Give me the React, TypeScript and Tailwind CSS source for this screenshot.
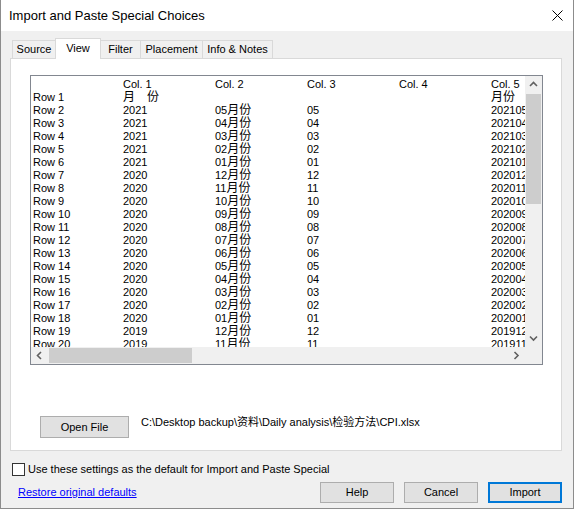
import React from 'react';

const ui = "font-['Liberation_Sans','Noto_Sans_CJK_SC',sans-serif]";

type Row = [string, string, string, string, string, string];

// year, month pairs shown in the preview grid (rows 2..20)
const periods: [number, string][] = [
  [2021, '05'], [2021, '04'], [2021, '03'], [2021, '02'], [2021, '01'],
  [2020, '12'], [2020, '11'], [2020, '10'], [2020, '09'], [2020, '08'],
  [2020, '07'], [2020, '06'], [2020, '05'], [2020, '04'], [2020, '03'],
  [2020, '02'], [2020, '01'], [2019, '12'], [2019, '11'],
];

const rows: Row[] = [
  ['Row 1', '月　份', '', '', '', '月份'],
  ...periods.map(([y, m], i): Row => [`Row ${i + 2}`, `${y}`, `${m}月份`, m, '', `${y}${m}`]),
];

const Chevron = ({ dir }: { dir: 'up' | 'down' | 'left' | 'right' }) => {
  const d = {
    up: 'M1 5 L4.5 1.5 L8 5',
    down: 'M1 1.5 L4.5 5 L8 1.5',
    left: 'M5 1 L1.5 4.5 L5 8',
    right: 'M1.5 1 L5 4.5 L1.5 8',
  }[dir];
  const horiz = dir === 'left' || dir === 'right';
  return (
    <svg width={horiz ? 7 : 9} height={horiz ? 9 : 7} viewBox={horiz ? '0 0 7 9' : '0 0 9 7'}>
      <path d={d} stroke="#606060" strokeWidth={1.6} fill="none" />
    </svg>
  );
};

const Cell = ({ text, first }: { text: string; first?: boolean }) => {
  // split digits from CJK so the ideographs get their own size
  const parts = text.split(/([\u3000-\u9fff]+)/).filter(Boolean);
  return (
    <div className={`${first ? 'w-[90px]' : 'w-[92px]'} shrink-0 whitespace-pre`}>
      {parts.map((p, i) =>
        /[\u3000-\u9fff]/.test(p) ? (
          <span key={i} className="text-[12px]">{p}</span>
        ) : (
          <span key={i}>{p}</span>
        )
      )}
    </div>
  );
};

const PreviewGrid = () => (
  <div className="ml-[19px] mt-[16px] w-[513px] h-[290px] border border-[#828790] bg-white flex flex-col">
    <div className="flex h-[271px]">
      <div className="flex-1 overflow-hidden pt-[2px] pl-[2px] text-[11px] leading-[13px] text-black">
        <div className="flex">
          <Cell text="" first />
          <Cell text="Col. 1" />
          <Cell text="Col. 2" />
          <Cell text="Col. 3" />
          <Cell text="Col. 4" />
          <Cell text="Col. 5" />
        </div>
        {rows.map((r) => (
          <div key={r[0]} className="flex h-[13px]">
            {r.map((c, i) => (
              <Cell key={i} text={c} first={i === 0} />
            ))}
          </div>
        ))}
      </div>
      {/* vertical scrollbar */}
      <div className="w-[17px] bg-[#f0f0f0] flex flex-col">
        <div className="h-[17px] flex items-center justify-center">
          <Chevron dir="up" />
        </div>
        <div className="flex-1">
          <div className="mt-[1px] mx-[1px] h-[110px] bg-[#cdcdcd]" />
        </div>
        <div className="h-[17px] flex items-center justify-center">
          <Chevron dir="down" />
        </div>
      </div>
    </div>
    {/* horizontal scrollbar */}
    <div className="flex h-[17px] bg-[#f0f0f0]">
      <div className="flex-1 flex items-center">
        <div className="w-[17px] h-full flex items-center justify-center">
          <Chevron dir="left" />
        </div>
        <div className="ml-[1px] w-[143px] h-[15px] bg-[#cdcdcd]" />
        <div className="ml-auto w-[17px] h-full flex items-center justify-center">
          <Chevron dir="right" />
        </div>
      </div>
      <div className="w-[17px]" />
    </div>
  </div>
);

const tabs = [
  { label: 'Source', w: 'w-[43px] border-l' },
  { label: 'View', w: 'w-[46px] border-x', active: true },
  { label: 'Filter', w: 'w-[40px] border-r' },
  { label: 'Placement', w: 'w-[62px] border-r' },
  { label: 'Info & Notes', w: 'w-[70px] border-r' },
];

const DialogButton = ({ label, primary }: { label: string; primary?: boolean }) => (
  <button
    className={`w-[74px] h-[21px] bg-[#e1e1e1] text-[11px] text-black flex items-center justify-center ${
      primary ? 'border-2 border-[#0078d7]' : 'border border-[#adadad]'
    }`}
  >
    {label}
  </button>
);

export default function App() {
  return (
    <div className={`${ui} w-[574px] h-[509px] border-x border-b border-[#8c8c8c] bg-[#f0f0f0] flex flex-col text-black`}>
      {/* title bar */}
      <div className="h-[31px] bg-white flex items-center pl-[8px] pr-[10px] shrink-0">
        <span className="text-[13px] leading-none">Import and Paste Special Choices</span>
        <svg className="ml-auto" width="11" height="11" viewBox="0 0 11 11">
          <path d="M0.5 0.5 L10.5 10.5 M10.5 0.5 L0.5 10.5" stroke="#000" strokeWidth={1} />
        </svg>
      </div>

      <div className="pt-[7px] flex flex-col">
        {/* tab strip */}
        <div className="ml-[11px] h-[20px] flex items-end text-[11px]">
          {tabs.map((t) =>
            t.active ? (
              <div
                key={t.label}
                className={`${t.w} relative z-10 -mb-[1px] h-[21px] border-t border-[#d9d9d9] bg-white flex items-center justify-center pb-[2px]`}
              >
                {t.label}
              </div>
            ) : (
              <div
                key={t.label}
                className={`${t.w} h-[18px] border-t border-[#d9d9d9] bg-[#f0f0f0] flex items-center justify-center`}
              >
                {t.label}
              </div>
            )
          )}
        </div>

        {/* tab panel */}
        <div className="ml-[9px] w-[552px] h-[393px] border border-[#d9d9d9] bg-white flex flex-col">
          <PreviewGrid />
          <div className="mt-[51px] ml-[29px] flex items-start">
            <button className="w-[89px] h-[22px] bg-[#e1e1e1] border border-[#adadad] text-[11px] flex items-center justify-center pt-[1px]">
              Open File
            </button>
            <span className="ml-[12px] text-[11px] leading-[13px] whitespace-nowrap">
              C:\Desktop backup\资料\Daily analysis\检验方法\CPI.xlsx
            </span>
          </div>
        </div>

        {/* default settings checkbox */}
        <div className="mt-[12px] ml-[11px] h-[13px] flex items-center">
          <div className="w-[13px] h-[13px] border border-[#333333] bg-white" />
          <span className="ml-[3px] text-[11px] leading-none">
            Use these settings as the default for Import and Paste Special
          </span>
        </div>

        {/* footer */}
        <div className="mt-[6px] h-[21px] flex items-center">
          <a className="ml-[17px] text-[11px] text-[#0000ff] underline cursor-pointer">Restore original defaults</a>
          <div className="ml-auto mr-[11px] flex gap-[10px]">
            <DialogButton label="Help" />
            <DialogButton label="Cancel" />
            <DialogButton label="Import" primary />
          </div>
        </div>
      </div>
    </div>
  );
}
